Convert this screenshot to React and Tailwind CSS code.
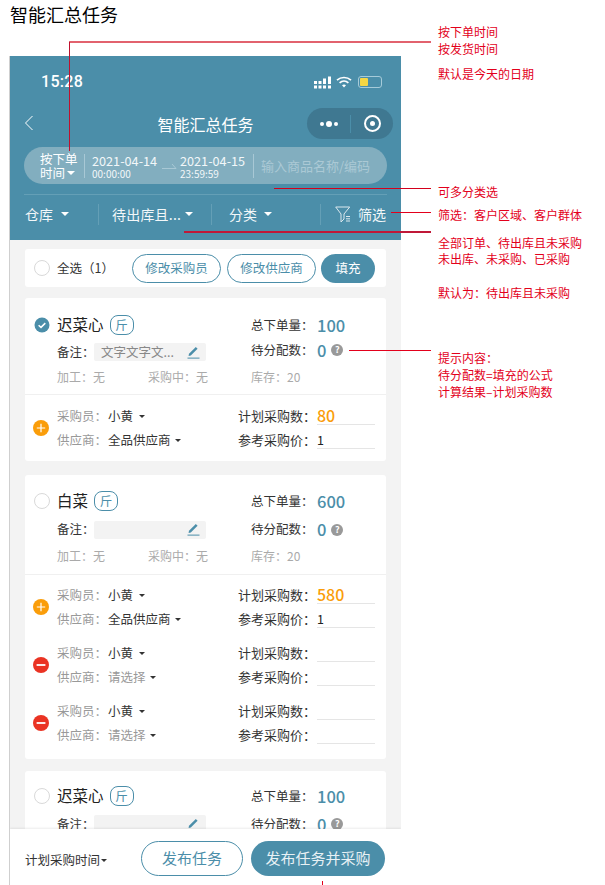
import React from "react";

const Caret = ({ className = "", c = "border-t-white" }) => (
  <span className={`inline-block w-0 h-0 border-x-[4px] border-x-transparent border-t-[4px] ${c} ${className}`} />
);

const SmallCaret = ({ className = "" }) => (
  <span className={`inline-block w-0 h-0 border-x-[3px] border-x-transparent border-t-[3px] border-t-[#333] ${className}`} />
);

const Check = ({ checked }) =>
  checked ? (
    <svg width="16" height="16" viewBox="0 0 16 16" className="shrink-0">
      <circle cx="8" cy="8" r="7.5" fill="#4b8ea9" />
      <path d="M4.6 8.2l2.4 2.2 4.3-4.3" fill="none" stroke="#fff" strokeWidth="1.5" />
    </svg>
  ) : (
    <span className="w-4 h-4 rounded-full border border-[#d9d9d9] bg-white shrink-0" />
  );

const Pencil = () => (
  <svg width="13" height="13" viewBox="0 0 13 13" className="shrink-0">
    <path d="M2 9.2L8.8 2.4l1.8 1.8-6.8 6.8-2.2.3z" transform="translate(0 -1.4)" fill="#4b8ea9" />
    <rect x="0.5" y="11.6" width="12" height="1" fill="#4b8ea9" />
  </svg>
);

const Help = () => (
  <span className="w-[12px] h-[12px] rounded-full bg-[#999] text-white text-[9px] leading-[12px] text-center font-bold shrink-0">?</span>
);

const Unit = ({ ml = "ml-[6px]" }) => (
  <span className={`${ml} w-[24px] h-[20px] rounded-[8px] border border-[#4b8ea9] text-[#4b8ea9] text-[12.5px] leading-[18px] text-center shrink-0`}>斤</span>
);

const Head = ({ name, total, note, checked, rows, lift = "", unitMl }) => (
  <div>
    <div className={`flex items-center pl-[9px] ${rows[0]}`}>
      <Check checked={checked} />
      <span className="ml-[7px] text-[15.5px] text-[#222]">{name}</span>
      <Unit ml={unitMl} />
      <span className="ml-auto w-[66px] text-[12.5px] text-[#333] whitespace-nowrap">总下单量：</span>
      <span className="w-[69px] text-[16.5px] font-medium text-[#4b8ea9]">{total}</span>
    </div>
    <div className={`flex items-center pl-[32px] ${rows[1]}`}>
      <span className="w-[37px] text-[12.5px] text-[#333] whitespace-nowrap">备注：</span>
      <span className="w-[112px] h-[18px] bg-[#f3f3f3] rounded-[2px] flex items-center pl-[7px] pr-[6px] text-[12.5px] text-[#888] whitespace-nowrap">
        <span className="flex-1">{note}</span>
        <Pencil />
      </span>
      <span className={`ml-auto w-[66px] text-[12.5px] text-[#333] whitespace-nowrap ${lift}`}>待分配数：</span>
      <span className={`w-[69px] flex items-center gap-[5px] ${lift}`}>
        <span className="text-[16.5px] font-medium text-[#4b8ea9]">0</span>
        <Help />
      </span>
    </div>
    {rows[2] && (
      <div className={`flex items-center pl-[32px] text-[12px] text-[#aaa] ${rows[2]}`}>
        <span className="w-[91px]">加工：无</span>
        <span className="w-[103px]">采购中：无</span>
        <span>库存：20</span>
      </div>
    )}
  </div>
);

const Action = ({ kind }) => (
  <svg width="16" height="16" viewBox="0 0 16 16" className="shrink-0">
    <circle cx="8" cy="8" r="8" fill={kind === "plus" ? "#fa9d0a" : "#ea3323"} />
    {kind === "plus" ? (
      <path d="M3.8 8h8.4M8 3.8v8.4" stroke="#fff" strokeWidth="1.2" />
    ) : (
      <path d="M3.6 8h8.8" stroke="#fff" strokeWidth="1.8" />
    )}
  </svg>
);

const Buyer = ({ kind, supplier, qty, price }) => (
  <div className="flex items-center pl-[8px]">
    <Action kind={kind} />
    <div className="ml-[8px] flex-1">
      <div className="h-[24px] flex items-center text-[12.5px]">
        <span className="w-[51px] text-[#999] whitespace-nowrap">采购员：</span>
        <span className="text-[#333]">小黄</span>
        <SmallCaret className="ml-[6px]" />
        <span className="ml-auto w-[79px] text-[13px] text-[#333] whitespace-nowrap">计划采购数：</span>
        <span className="w-[58px] mr-[11px] h-[18px] border-b border-[#e5e5e5] text-[16px] leading-[17px] font-medium text-[#fa9d0a]">{qty}</span>
      </div>
      <div className="h-[24px] flex items-center text-[12.5px]">
        <span className="w-[51px] text-[#999] whitespace-nowrap">供应商：</span>
        <span className={supplier ? "text-[#333]" : "text-[#999]"}>{supplier || "请选择"}</span>
        <SmallCaret className="ml-[4px]" />
        <span className="ml-auto w-[79px] text-[13px] text-[#333] whitespace-nowrap">参考采购价：</span>
        <span className="w-[58px] mr-[11px] h-[18px] border-b border-[#e5e5e5] text-[12.5px] leading-[18px] text-[#222]">{price}</span>
      </div>
    </div>
  </div>
);

const Note = ({ className = "", children }) => (
  <div className={`absolute left-[438px] text-[12px] leading-[16px] text-[#e3001b] whitespace-nowrap ${className}`}>{children}</div>
);

export default function App() {
  return (
    <div className="relative w-[605px] h-[885px] overflow-hidden bg-white font-['Noto_Sans_CJK_SC',sans-serif]">
      <div className="h-[56px] pl-[10px] text-[18px] leading-[28px] text-black">智能汇总任务</div>

      <div className="relative ml-[9px] w-[392px] h-[829px] border-l border-[#cfcfcf] bg-[#f3f3f3] flex flex-col overflow-hidden">
        {/* header */}
        <div className="h-[184px] bg-[#4b8ea9] text-white shrink-0 flex flex-col">
          <div className="h-[52px] flex items-center justify-between pl-[31px] pr-[19px]">
            <span className="text-[16px] tracking-[0.3px] font-medium font-['Roboto',sans-serif]">15:28</span>
            <span className="flex items-center gap-[4px]">
              <svg width="18" height="13" viewBox="0 0 18 13">
                <g fill="#fff">
                  <rect x="0" y="5" width="3" height="3" /><rect x="0" y="9.5" width="3" height="3" />
                  <rect x="4.5" y="5" width="3" height="3" /><rect x="4.5" y="9.5" width="3" height="3" />
                  <rect x="9" y="2.5" width="3" height="5.5" /><rect x="9" y="9.5" width="3" height="3" />
                  <rect x="14" y="0.5" width="3" height="7.5" /><rect x="14" y="9.5" width="3" height="3" />
                </g>
              </svg>
              <svg width="16" height="12" viewBox="0 0 16 12" fill="none" stroke="#fff" strokeWidth="1.7">
                <path d="M1 4.2C5 .6 11 .6 15 4.2" />
                <path d="M3.6 6.9c2.6-2.3 6.2-2.3 8.8 0" />
                <path d="M8 11.5l-2-2.2c1.2-1 2.8-1 4 0z" fill="#fff" stroke="none" />
              </svg>
              <span className="ml-[2px] w-[24px] h-[12px] rounded-[3px] border border-[#a6cbd9] p-[1px] flex">
                <span className="w-[8px] bg-[#f6d743] rounded-[1px]" />
              </span>
            </span>
          </div>
          <div className="h-[39px] relative">
            <div className="h-[31px] flex items-center justify-center">
              <svg width="10" height="16" viewBox="0 0 10 16" className="absolute left-[14px] top-[7px]" fill="none" stroke="#fff" strokeWidth="1">
                <path d="M8.5 1L1.5 8l7 7" />
              </svg>
              <span className="text-[16px]">智能汇总任务</span>
            </div>
            <div className="absolute left-[297px] top-[0px] w-[86px] h-[31px] rounded-full bg-[#3f7891] flex items-center">
              <span className="w-[43px] flex items-center justify-center gap-[2px]">
                <i className="w-[4px] h-[4px] rounded-full bg-white" />
                <i className="w-[6px] h-[6px] rounded-full bg-white" />
                <i className="w-[4px] h-[4px] rounded-full bg-white" />
              </span>
              <span className="w-px h-[18px] bg-[#4b8ea9]" />
              <span className="flex-1 flex justify-center">
                <span className="w-[17px] h-[17px] rounded-full border-[2px] border-white flex items-center justify-center">
                  <i className="w-[5px] h-[5px] rounded-full bg-white" />
                </span>
              </span>
            </div>
          </div>
          <div className="mx-[14px] h-[37px] rounded-full bg-[#82aebf] flex items-center whitespace-nowrap">
            <div className="w-[60px] pl-[16px] text-[12.5px] leading-[14px]">
              <div>按下单</div>
              <div className="flex items-center">时间<Caret className="ml-[2px]" /></div>
            </div>
            <span className="w-px h-[24px] bg-[#a8c8d5]" />
            <div className="ml-[7px] w-[65px] shrink-0 text-[#f2f7f9] pt-[1px]">
              <div className="text-[12.7px] leading-[15px]">2021-04-14</div>
              <div className="text-[10px] leading-[12px]">00:00:00</div>
            </div>
            <svg width="15" height="6" viewBox="0 0 15 6" className="ml-[5px] mr-[3px] shrink-0" fill="none" stroke="#a8c8d5" strokeWidth="1"><path d="M0 5.5h14L10 1" /></svg>
            <div className="w-[65px] shrink-0 text-[#f2f7f9] pt-[1px]">
              <div className="text-[12.7px] leading-[15px]">2021-04-15</div>
              <div className="text-[10px] leading-[12px]">23:59:59</div>
            </div>
            <span className="ml-[8px] w-px h-[24px] bg-[#a8c8d5]" />
            <span className="ml-[7px] text-[13px] text-[#abc9d5]">输入商品名称/编码</span>
          </div>
          <div className="mx-[14px] mt-[10px] h-px bg-[#649fb6]" />
          <div className="flex-1 flex items-center pl-[15px] pb-[7px] text-[14px] text-[#f2f7f9] whitespace-nowrap">
            <div className="w-[73px] flex items-center">仓库<Caret className="ml-[8px]" /></div>
            <div className="w-[113px] pl-[13px] border-l border-[#649fb6] flex items-center"><span className="tracking-[0.2px]">待出库且...</span><Caret className="ml-[4px]" /></div>
            <div className="w-[109px] pl-[17px] border-l border-[#649fb6] flex items-center">分类<Caret className="ml-[7px]" /></div>
            <div className="pl-[14px] border-l border-[#649fb6] flex items-center gap-[7px]">
              <svg width="16" height="17" viewBox="0 0 16 17" fill="none" stroke="#dbe8ee" strokeWidth="1">
                <path d="M.7 1h14L9 8v5l-3 3V8z" />
                <path d="M11 10.5h4M11 12.8h4M11 15h4" />
              </svg>
              筛选
            </div>
          </div>
        </div>

        {/* body */}
        <div className="flex-1 min-h-0 overflow-hidden pl-[15px] pr-[15px] pt-[9px] flex flex-col">
          <div className="h-[38px] shrink-0 bg-white rounded-[3px] flex items-center pl-[9px] text-[12.5px]">
            <Check />
            <span className="ml-[7px] text-[#333] whitespace-nowrap">全选（1）</span>
            <span className="ml-auto h-[29px] w-[89px] rounded-full border-[1.5px] border-[#4b8ea9] text-[#4b8ea9] text-[12.5px] flex items-center justify-center">修改采购员</span>
            <span className="ml-[6px] h-[29px] w-[89px] rounded-full border-[1.5px] border-[#4b8ea9] text-[#4b8ea9] text-[12.5px] flex items-center justify-center">修改供应商</span>
            <span className="ml-[5px] mr-[11px] h-[29px] w-[54px] rounded-full bg-[#4b8ea9] text-white text-[12.5px] flex items-center justify-center">填充</span>
          </div>

          <div className="mt-[11px] shrink-0 bg-white rounded-[3px]">
            <div className="pt-[13px] pb-[5px] border-b border-[#f0f0f0]">
              <Head name="迟菜心" total="100" note="文字文字文..." checked lift="-mt-[4px]" rows={["h-[28px]", "h-[26px]", "h-[24px]"]} />
            </div>
            <div className="pt-[9px] pb-[9px]">
              <Buyer kind="plus" supplier="全品供应商" qty="80" price="1" />
            </div>
          </div>

          <div className="mt-[14px] shrink-0 bg-white rounded-[3px]">
            <div className="pt-[12px] pb-[6px] border-b border-[#f0f0f0]">
              <Head name="白菜" total="600" note="" rows={["h-[28px]", "h-[29px]", "h-[24px]"]} />
            </div>
            <div className="pt-[8px] pb-[12px] flex flex-col gap-[10px]">
              <Buyer kind="plus" supplier="全品供应商" qty="580" price="1" />
              <Buyer kind="minus" />
              <Buyer kind="minus" />
            </div>
          </div>

          <div className="mt-[12px] shrink-0 bg-white rounded-[3px]">
            <div className="pt-[11px]">
              <Head name="迟菜心" total="100" note="" rows={["h-[28px]", "h-[28px]"]} />
            </div>
          </div>
        </div>

        {/* footer */}
        <div className="relative h-[56px] shrink-0 bg-white shadow-[0_-1px_2px_rgba(0,0,0,0.08)] flex items-center pl-[15px] pr-[16px] pt-[3px]">
          <span className="mt-[3px] flex items-center">
            <span className="text-[12.5px] text-[#333] whitespace-nowrap">计划采购时间</span>
            <SmallCaret className="ml-[1px]" />
          </span>
          <span className="ml-auto h-[35px] w-[102px] rounded-full border-[1.5px] border-[#4b8ea9] text-[#4b8ea9] text-[15px] flex items-center justify-center">发布任务</span>
          <span className="ml-[8px] h-[35px] w-[134px] rounded-full bg-[#4b8ea9] text-[#e8f1f5] text-[15px] flex items-center justify-center whitespace-nowrap">发布任务并采购</span>
        </div>
      </div>

      {/* annotations */}
      <div className="absolute left-[69px] top-[41px] w-[362px] h-[2px] bg-[#e2626e]" />
      <div className="absolute left-[69px] top-[42px] w-px h-[109px] bg-[#c0102e]" />
      <div className="absolute left-[274px] top-[188px] w-[157px] h-px bg-[#d4001c]" />
      <div className="absolute left-[391px] top-[212px] w-[40px] h-px bg-[#e3001b]" />
      <div className="absolute left-[184px] top-[231px] w-[247px] h-[2px] bg-[#c01838]" />
      <div className="absolute left-[349px] top-[350px] w-[82px] h-px bg-[#e3001b]" />
      <div className="absolute left-[322px] top-[881px] w-px h-[4px] bg-[#e3001b]" />

      <Note className="top-[24px]">按下单时间</Note>
      <Note className="top-[41px]">按发货时间</Note>
      <Note className="top-[66px]">默认是今天的日期</Note>
      <Note className="top-[184px]">可多分类选</Note>
      <Note className="top-[207px]">筛选：客户区域、客户群体</Note>
      <Note className="top-[235px]">全部订单、待出库且未采购</Note>
      <Note className="top-[251px]">未出库、未采购、已采购</Note>
      <Note className="top-[285px]">默认为：待出库且未采购</Note>
      <Note className="top-[350px]">提示内容：</Note>
      <Note className="top-[367px]">待分配数=填充的公式</Note>
      <Note className="top-[384px]">计算结果–计划采购数</Note>
    </div>
  );
}
